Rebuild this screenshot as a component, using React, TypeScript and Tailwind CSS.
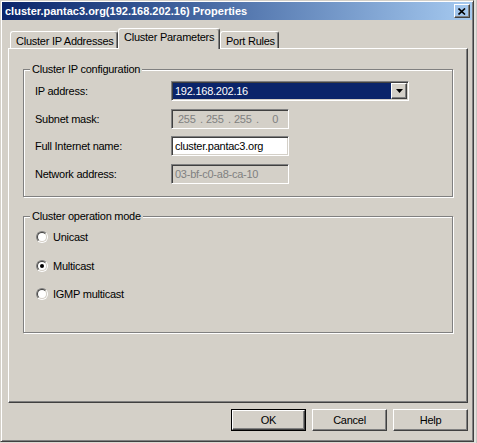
import React from 'react';

// classic 3D bevels
const raised =
  'border border-t-white border-l-white border-r-[#404040] border-b-[#404040] shadow-[inset_-1px_-1px_0_#808080]';
const sunken =
  'border border-t-[#808080] border-l-[#808080] border-r-white border-b-white shadow-[inset_1px_1px_0_#404040,inset_-1px_-1px_0_#d4d0c8]';

function GroupBox({ title, className, children }: { title: string; className?: string; children: React.ReactNode }) {
  return (
    <div className={`relative border border-[#808080] shadow-[1px_1px_0_#fff,inset_1px_1px_0_#fff] ${className ?? ''}`}>
      <span className="absolute -top-[8px] left-[6px] bg-[#d4d0c8] px-[2px] leading-[14px]">{title}</span>
      {children}
    </div>
  );
}

function Field({ label, children }: { label: string; children: React.ReactNode }) {
  return (
    <div className="flex h-[20px] items-center">
      <span className="w-[136px]">{label}</span>
      {children}
    </div>
  );
}

function Radio({ label, checked }: { label: string; checked?: boolean }) {
  return (
    <div className="flex h-[16px] items-center gap-[5px]">
      <div className="h-[12px] w-[12px] rounded-full border border-t-[#808080] border-l-[#808080] border-r-white border-b-white">
        <div className="flex h-full w-full items-center justify-center rounded-full border border-t-[#404040] border-l-[#404040] border-r-[#d4d0c8] border-b-[#d4d0c8] bg-white">
          {checked && <div className="h-[4px] w-[4px] rounded-full bg-black" />}
        </div>
      </div>
      <span>{label}</span>
    </div>
  );
}

function Tab({ label, active, width }: { label: string; active?: boolean; width: string }) {
  if (active) {
    return (
      <div
        className={`relative z-10 -mb-px h-[21px] ${width} rounded-t-[3px] border-t border-l border-r border-t-white border-l-white border-r-[#404040] bg-[#d4d0c8] pl-[5px] pt-[1px] leading-[14px] shadow-[inset_-1px_0_0_#808080]`}
      >
        {label}
      </div>
    );
  }
  return (
    <div
      className={`h-[17px] ${width} rounded-t-[3px] border-t border-l border-r border-t-white border-l-white border-r-[#404040] pl-[5px] pt-[2px] leading-[14px] shadow-[inset_-1px_0_0_#808080]`}
    >
      {label}
    </div>
  );
}

function Button({ label, isDefault }: { label: string; isDefault?: boolean }) {
  const inner = (
    <div className={`flex h-full w-full items-center justify-center ${raised}`}>{label}</div>
  );
  if (isDefault) {
    return <div className="h-[22px] w-[75px] border border-black">{inner}</div>;
  }
  return <div className="h-[22px] w-[75px]">{inner}</div>;
}

export default function App() {
  return (
    <div className="flex h-[443px] w-[477px] bg-[#dcd9d3] text-[11px] tracking-[-0.25px] text-black font-['Liberation_Sans',Arial,sans-serif]">
      <div className="flex h-[442px] w-[474px] flex-col border border-t-[#d4d0c8] border-l-[#d4d0c8] border-r-[#404040] border-b-[#404040] bg-[#d4d0c8] p-px shadow-[inset_1px_1px_0_#fff,inset_-1px_-1px_0_#808080]">
        {/* title bar */}
        <div className="flex h-[18px] items-center bg-gradient-to-r from-[#0a246a] to-[#a6caf0] pl-[3px] pr-[2px]">
          <span className="flex-1 font-bold tracking-[0px] text-white">
            cluster.pantac3.org(192.168.202.16) Properties
          </span>
          <div className={`flex h-[14px] w-[16px] items-center justify-center ${raised}`}>
            <svg width="8" height="7" viewBox="0 0 8 7">
              <path d="M0.5 0.5 L7 6.5 M7 0.5 L0.5 6.5" stroke="#000" strokeWidth="1.6" />
            </svg>
          </div>
        </div>

        <div className="ml-[6px] mr-[4px] mt-[8px] flex flex-col">
          {/* tabs */}
          <div className="flex h-[20px] items-end pl-[2px]">
            <Tab label="Cluster IP Addresses" width="w-[108px]" />
            <Tab label="Cluster Parameters" width="w-[102px]" active />
            <Tab label="Port Rules" width="w-[59px]" />
          </div>

          {/* tab page */}
          <div className={`flex h-[355px] flex-col pl-[14px] pr-[14px] pt-[20px] ${raised}`}>
            <GroupBox title="Cluster IP configuration" className="h-[128px] pl-[11px] pt-[11px]">
              <Field label="IP address:">
                <div className={`flex h-[20px] w-[238px] bg-white p-px ${sunken}`}>
                  <div className="flex-1 bg-[#0a246a] pl-[2px] leading-[16px] text-white">192.168.202.16</div>
                  <div className={`flex h-[16px] w-[16px] items-center justify-center bg-[#d4d0c8] ${raised}`}>
                    <svg width="7" height="4" viewBox="0 0 7 4">
                      <polygon points="0,0 7,0 3.5,4" fill="#000" />
                    </svg>
                  </div>
                </div>
              </Field>
              <div className="mt-[8px]">
                <Field label="Subnet mask:">
                  <div className={`flex h-[20px] w-[118px] items-center pl-[6px] text-[#808080] ${sunken}`}>
                    <span className="w-[19px]">255</span>
                    <span className="w-[9px] text-center">.</span>
                    <span className="w-[19px]">255</span>
                    <span className="w-[9px] text-center">.</span>
                    <span className="w-[19px]">255</span>
                    <span className="w-[9px] text-center">.</span>
                    <span className="w-[16px] text-right">0</span>
                  </div>
                </Field>
              </div>
              <div className="mt-[7px]">
                <Field label="Full Internet name:">
                  <div className={`flex h-[20px] w-[118px] items-center bg-white pl-[3px] ${sunken}`}>
                    cluster.pantac3.org
                  </div>
                </Field>
              </div>
              <div className="mt-[8px]">
                <Field label="Network address:">
                  <div className={`flex h-[20px] w-[118px] items-center pl-[3px] text-[#808080] ${sunken}`}>
                    03-bf-c0-a8-ca-10
                  </div>
                </Field>
              </div>
            </GroupBox>

            <GroupBox title="Cluster operation mode" className="mt-[19px] flex h-[117px] flex-col pl-[12px] pt-[12px]">
              <Radio label="Unicast" />
              <div className="mt-[13px]">
                <Radio label="Multicast" checked />
              </div>
              <div className="mt-[12px]">
                <Radio label="IGMP multicast" />
              </div>
            </GroupBox>
          </div>

          {/* dialog buttons */}
          <div className="mt-[6px] flex justify-end gap-[6px]">
            <Button label="OK" isDefault />
            <Button label="Cancel" />
            <Button label="Help" />
          </div>
        </div>
      </div>
      <div className="h-full w-[3px] border-r border-[#c8c5bf] bg-[#e2e0dc]" />
    </div>
  );
}
